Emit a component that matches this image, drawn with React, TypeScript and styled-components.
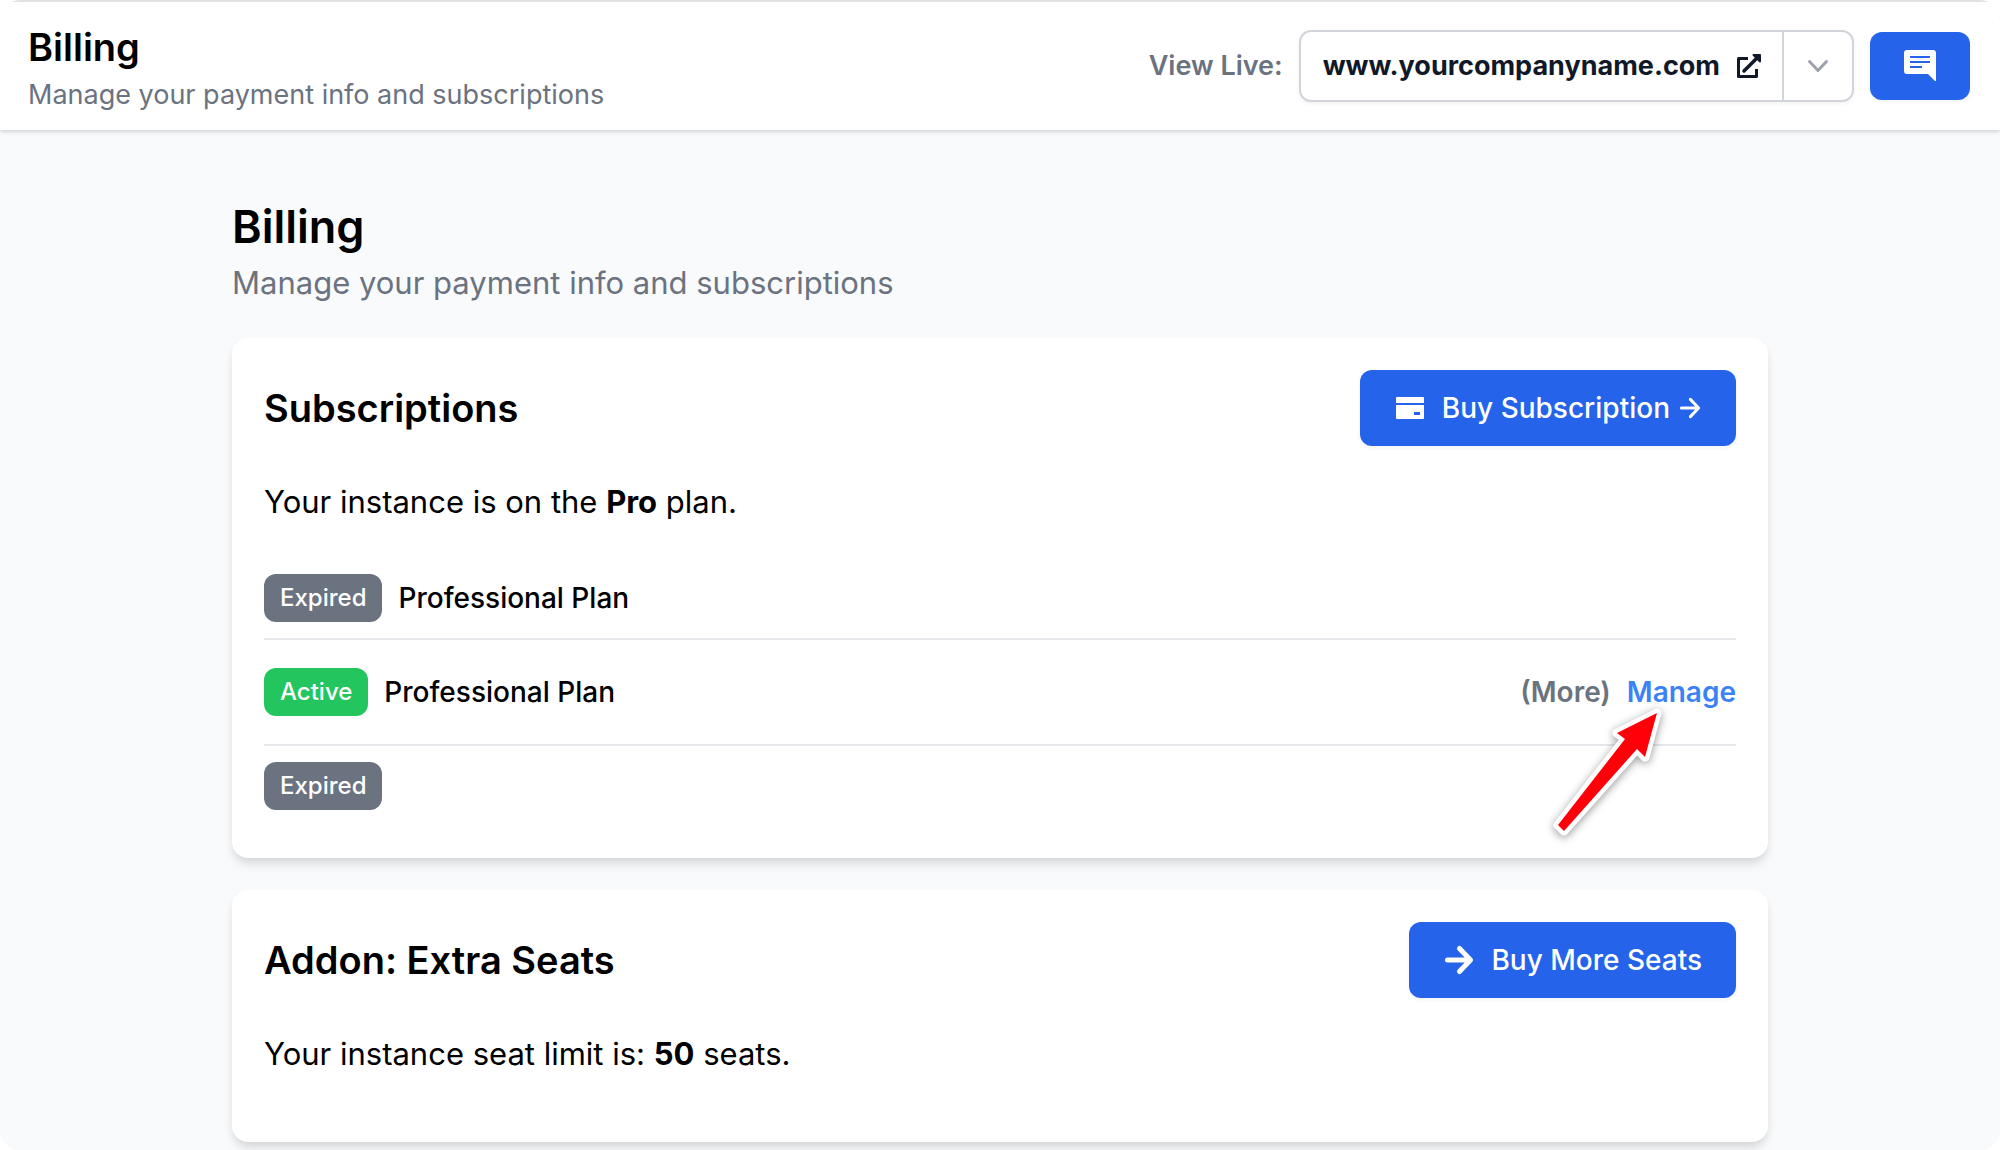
import React from "react";
import styled, { createGlobalStyle } from "styled-components";

const GlobalStyle = createGlobalStyle`
  *, *::before, *::after { box-sizing: border-box; }
  body {
    margin: 0;
    background: #ffffff;
    color: #000000;
    font-family: Inter, "Liberation Sans", sans-serif;
  }
  h1, h2, p, ul { margin: 0; padding: 0; }
  button { font: inherit; border: 0; cursor: pointer; }
  a { color: inherit; text-decoration: none; }
  svg { display: block; flex: none; }
`;

const Frame = styled.div`
  display: flex;
  flex-direction: column;
  min-height: 100vh;
  overflow: hidden;
  border-radius: 20px;
  background: #f9fafb;
`;

const TopBar = styled.header`
  display: flex;
  align-items: center;
  justify-content: space-between;
  gap: 32px;
  padding: 18px 30px 16px 28px;
  background: #ffffff;
  box-shadow: inset 0 2px 0 #e2e2e2, 0 2px 4px rgba(0, 0, 0, 0.16);
`;

const BarTitle = styled.p`
  font-size: 38px;
  line-height: 58px;
  font-weight: 600;
`;

const BarSubtitle = styled.p`
  font-size: 27px;
  line-height: 38px;
  color: #6b7280;
`;

const BarActions = styled.div`
  display: flex;
  align-items: center;
  gap: 16px;
`;

const LiveLabel = styled.span`
  font-size: 27px;
  line-height: 40px;
  font-weight: 600;
  color: #6b7280;
`;

const SplitButton = styled.div`
  display: flex;
  height: 72px;
  border: 2px solid #d1d5db;
  border-radius: 12px;
  background: #ffffff;
  box-shadow: 0 2px 4px rgba(0, 0, 0, 0.05);
`;

const SiteLink = styled.a`
  display: flex;
  align-items: center;
  gap: 16px;
  padding: 0 20px 0 22px;
  font-size: 27px;
  line-height: 40px;
  font-weight: 700;
  color: #111827;
`;

const MenuToggle = styled.button`
  display: flex;
  align-items: center;
  justify-content: center;
  width: 70px;
  padding: 0;
  border-left: 2px solid #d1d5db;
  background: transparent;
  color: #9ca3af;
`;

const PrimaryButton = styled.button<{ $compact?: boolean }>`
  display: flex;
  align-items: center;
  justify-content: center;
  height: ${(p) => (p.$compact ? "68px" : "76px")};
  padding: 0 34px;
  border-radius: 12px;
  background: #2563eb;
  color: #ffffff;
  font-size: 28px;
  line-height: 40px;
  font-weight: 500;
  white-space: nowrap;
  box-shadow: 0 2px 4px rgba(0, 0, 0, 0.05);
`;

const ButtonLabel = styled.span`
  display: flex;
  align-items: center;
  gap: 8px;
  margin-left: 16px;
`;

const Content = styled.main`
  display: flex;
  flex-direction: column;
  gap: 32px;
  width: 100%;
  max-width: 1536px;
  margin: 0 auto;
  padding-top: 64px;
`;

const PageTitle = styled.h1`
  font-size: 45px;
  line-height: 66px;
  font-weight: 600;
`;

const PageSubtitle = styled.p`
  font-size: 31px;
  line-height: 46px;
  color: #6b7280;
`;

const Card = styled.section<{ $roomy?: boolean }>`
  display: flex;
  flex-direction: column;
  gap: 32px;
  padding: 32px 32px ${(p) => (p.$roomy ? "64px" : "32px")};
  border-radius: 16px;
  background: #ffffff;
  box-shadow: 0 8px 12px -2px rgba(0, 0, 0, 0.1), 0 4px 8px -2px rgba(0, 0, 0, 0.08);
`;

const CardHeader = styled.div`
  display: flex;
  align-items: center;
  justify-content: space-between;
`;

const CardTitle = styled.h2`
  font-size: 38px;
  line-height: 58px;
  font-weight: 600;
`;

const CardText = styled.p`
  font-size: 31px;
  line-height: 48px;
`;

const PlanList = styled.ul`
  list-style: none;
`;

const PlanRow = styled.li`
  display: flex;
  align-items: center;
  gap: 16px;
  padding: 16px 0;
  font-size: 28px;
  line-height: 40px;
  font-weight: 500;

  & + & {
    border-top: 2px solid #e5e7eb;
  }
`;

const Badge = styled.span<{ $active?: boolean }>`
  padding: 4px 16px;
  border-radius: 12px;
  background: ${(p) => (p.$active ? "#22c55e" : "#6b7280")};
  color: #ffffff;
  font-size: 24px;
`;

const PlanActions = styled.div`
  position: relative;
  display: flex;
  align-items: center;
  gap: 16px;
  height: 72px;
  margin-left: auto;
  font-weight: 600;
`;

const MoreButton = styled.button`
  padding: 0;
  background: transparent;
  color: #6b7280;
`;

const ManageLink = styled.a`
  color: #3b82f6;
`;

const Pointer = styled.svg`
  position: absolute;
  right: 66px;
  top: 44px;
  overflow: visible;
  pointer-events: none;
  filter: drop-shadow(0 2px 4px rgba(0, 0, 0, 0.4));
`;

const ExternalIcon = () => (
  <svg width="26" height="26" viewBox="0 0 26 26" fill="none" stroke="currentColor" strokeWidth="3" strokeLinejoin="round" aria-hidden="true">
    <path d="M12 5.500H2.500V23.500H20.500V16" />
    <path d="M8 18L21 5" strokeLinecap="round" strokeWidth="3.500" />
    <path d="M17.500 2H24v6.500z" fill="currentColor" strokeWidth="2" />
  </svg>
);

const ChevronIcon = () => (
  <svg width="24" height="24" viewBox="0 0 24 24" fill="none" stroke="currentColor" strokeWidth="3" strokeLinecap="round" strokeLinejoin="round" aria-hidden="true">
    <path d="M3.500 7.500l8.500 9 8.500-9" />
  </svg>
);

const ChatIcon = () => (
  <svg width="32" height="32" viewBox="0 0 32 32" fill="currentColor" fillRule="evenodd" aria-hidden="true">
    <path d="M3 0h26a3 3 0 0 1 3 3v28h-1l-7-7H3a3 3 0 0 1-3-3V3a3 3 0 0 1 3-3zM6 6v2h20V6zM6 11v2h20v-2zM6 16v2h12v-2z" />
  </svg>
);

const CardIcon = () => (
  <svg width="32" height="32" viewBox="0 0 32 32" fill="currentColor" fillRule="evenodd" aria-hidden="true">
    <path d="M3 5h26a1 1 0 0 1 1 1v5H2V6a1 1 0 0 1 1-1zM2 13h28v13a1 1 0 0 1-1 1H3a1 1 0 0 1-1-1zM20 20v3h6v-3z" />
  </svg>
);

const ArrowIcon = ({ size, stroke }: { size: number; stroke: number }) => (
  <svg width={size} height={size} viewBox="0 0 32 32" fill="none" stroke="currentColor" strokeWidth={stroke} strokeLinecap="round" strokeLinejoin="round" aria-hidden="true">
    <path d="M4.500 16H27M16.500 4.500L27.500 16l-11 11.500" />
  </svg>
);

type Plan = { status: "Expired" | "Active"; name?: string };

const plans: Plan[] = [
  { status: "Expired", name: "Professional Plan" },
  { status: "Active", name: "Professional Plan" },
  { status: "Expired" },
];

export default function App() {
  return (
    <>
      <GlobalStyle />
      <Frame>
        <TopBar>
          <div>
            <BarTitle>Billing</BarTitle>
            <BarSubtitle>Manage your payment info and subscriptions</BarSubtitle>
          </div>
          <BarActions>
            <LiveLabel>View Live:</LiveLabel>
            <SplitButton>
              <SiteLink href="#live">
                www.yourcompanyname.com
                <ExternalIcon />
              </SiteLink>
              <MenuToggle type="button" aria-label="More sites">
                <ChevronIcon />
              </MenuToggle>
            </SplitButton>
            <PrimaryButton type="button" $compact aria-label="Messages">
              <ChatIcon />
            </PrimaryButton>
          </BarActions>
        </TopBar>

        <Content>
          <div>
            <PageTitle>Billing</PageTitle>
            <PageSubtitle>Manage your payment info and subscriptions</PageSubtitle>
          </div>

          <Card>
            <CardHeader>
              <CardTitle>Subscriptions</CardTitle>
              <PrimaryButton type="button">
                <CardIcon />
                <ButtonLabel>
                  Buy Subscription
                  <ArrowIcon size={24} stroke={4} />
                </ButtonLabel>
              </PrimaryButton>
            </CardHeader>
            <CardText>
              Your instance is on the <strong>Pro</strong> plan.
            </CardText>
            <PlanList>
              {plans.map((plan, i) => (
                <PlanRow key={i}>
                  <Badge $active={plan.status === "Active"}>{plan.status}</Badge>
                  {plan.name && <span>{plan.name}</span>}
                  {plan.status === "Active" && (
                    <PlanActions>
                      <MoreButton type="button">(More)</MoreButton>
                      <ManageLink href="#manage">Manage</ManageLink>
                      <Pointer width="120" height="132" viewBox="0 0 120 132" aria-hidden="true">
                        <path
                          d="M107 13L67 33L75 39L8 125L14 131L87 49L95 57Z"
                          fill="#ff0008"
                          stroke="#ffffff"
                          strokeWidth="9"
                          strokeLinejoin="round"
                          paintOrder="stroke"
                        />
                      </Pointer>
                    </PlanActions>
                  )}
                </PlanRow>
              ))}
            </PlanList>
          </Card>

          <Card $roomy>
            <CardHeader>
              <CardTitle>Addon: Extra Seats</CardTitle>
              <PrimaryButton type="button">
                <ArrowIcon size={32} stroke={5} />
                <ButtonLabel>Buy More Seats</ButtonLabel>
              </PrimaryButton>
            </CardHeader>
            <CardText>
              Your instance seat limit is: <strong>50</strong> seats.
            </CardText>
          </Card>
        </Content>
      </Frame>
    </>
  );
}
